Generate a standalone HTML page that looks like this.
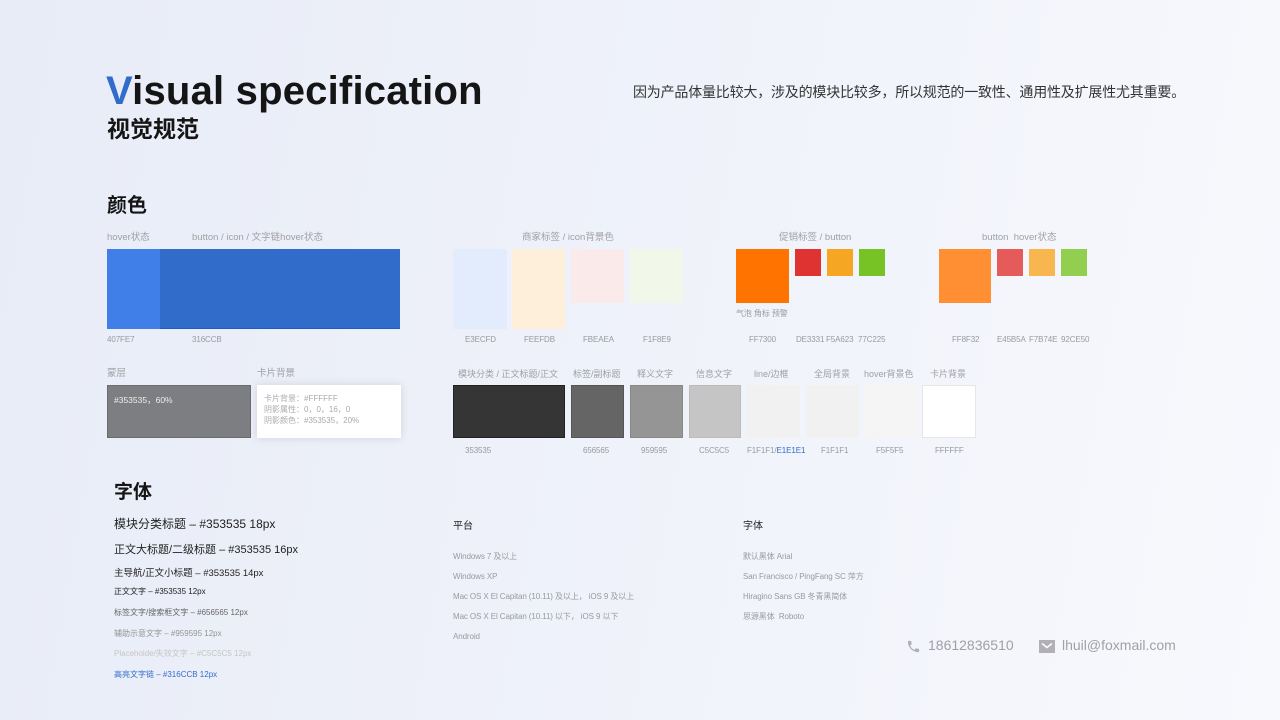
<!DOCTYPE html>
<html><head><meta charset="utf-8"><style>
*{margin:0;padding:0;box-sizing:border-box}
body{width:1280px;height:720px;overflow:hidden;position:relative;font-family:"Liberation Sans","Noto Sans CJK SC",sans-serif;background:linear-gradient(100deg,#e8ecf7 0%,#eff2fa 50%,#f8f9fd 100%)}
.a{position:absolute;white-space:nowrap}
.l{font-size:9.5px;color:#a0a0a6;line-height:12px}
.c{font-size:8px;color:#9a9aa0;line-height:12px;letter-spacing:-0.1px}
.s{position:absolute}
</style></head><body>
<div class="a" style="left:106px;top:68px;font-size:40px;font-weight:bold;color:#151515;letter-spacing:0.2px;line-height:46px"><span style="color:#316CCB">V</span>isual specification</div>
<div class="a" style="left:107px;top:114px;font-size:23px;font-weight:bold;color:#151515;line-height:30px">视觉规范</div>
<div class="a" style="left:633px;top:83px;font-size:14px;color:#333;line-height:18px;letter-spacing:-0.2px">因为产品体量比较大，涉及的模块比较多，所以规范的一致性、通用性及扩展性尤其重要。</div>
<div class="a" style="left:107px;top:194px;font-size:20px;font-weight:bold;color:#151515;line-height:24px">颜色</div>

<div class="a l" style="left:107px;top:232px">hover状态</div>
<div class="a l" style="left:192px;top:232px">button / icon / 文字链hover状态</div>
<div class="s" style="left:107px;top:249px;width:53px;height:80px;background:#407FE7"></div>
<div class="s" style="left:160px;top:249px;width:240px;height:80px;background:#316CCB;border-bottom:1px solid #1d5bc9"></div>
<div class="a c" style="left:107px;top:334px">407FE7</div>
<div class="a c" style="left:192px;top:334px">316CCB</div>

<div class="a l" style="left:522px;top:232px">商家标签 / icon背景色</div>
<div class="s" style="left:453px;top:249px;width:54px;height:80px;background:#E3ECFD"></div>
<div class="s" style="left:512px;top:249px;width:53px;height:80px;background:#FEEFDB"></div>
<div class="s" style="left:571px;top:249px;width:53px;height:54px;background:#FBEAEA"></div>
<div class="s" style="left:630px;top:249px;width:53px;height:54px;background:#F1F8E9"></div>
<div class="a c" style="left:465px;top:334px">E3ECFD</div>
<div class="a c" style="left:524px;top:334px">FEEFDB</div>
<div class="a c" style="left:583px;top:334px">FBEAEA</div>
<div class="a c" style="left:643px;top:334px">F1F8E9</div>

<div class="a l" style="left:779px;top:232px">促销标签 / button</div>
<div class="s" style="left:736px;top:249px;width:53px;height:54px;background:#FF7300"></div>
<div class="s" style="left:795px;top:249px;width:26px;height:27px;background:#DE3331"></div>
<div class="s" style="left:827px;top:249px;width:26px;height:27px;background:#F5A623"></div>
<div class="s" style="left:859px;top:249px;width:26px;height:27px;background:#77C225"></div>
<div class="a c" style="left:736px;top:308px">气泡 角标 预警</div>
<div class="a c" style="left:749px;top:334px">FF7300</div>
<div class="a c" style="left:796px;top:334px">DE3331</div>
<div class="a c" style="left:826px;top:334px">F5A623</div>
<div class="a c" style="left:858px;top:334px">77C225</div>

<div class="a l" style="left:982px;top:232px">button &nbsp;hover状态</div>
<div class="s" style="left:939px;top:249px;width:52px;height:54px;background:#FF8F32"></div>
<div class="s" style="left:997px;top:249px;width:26px;height:27px;background:#E45B5A"></div>
<div class="s" style="left:1029px;top:249px;width:26px;height:27px;background:#F7B74E"></div>
<div class="s" style="left:1061px;top:249px;width:26px;height:27px;background:#92CE50"></div>
<div class="a c" style="left:952px;top:334px">FF8F32</div>
<div class="a c" style="left:997px;top:334px">E45B5A</div>
<div class="a c" style="left:1029px;top:334px">F7B74E</div>
<div class="a c" style="left:1061px;top:334px">92CE50</div>

<div class="a l" style="left:107px;top:368px">蒙层</div>
<div class="a l" style="left:257px;top:368px">卡片背景</div>
<div class="s" style="left:107px;top:385px;width:144px;height:53px;background:#7d7e82;border:1px solid #6a6b6f"></div>
<div class="a" style="left:114px;top:394px;font-size:8.5px;color:#eee">#353535，60%</div>
<div class="s" style="left:257px;top:385px;width:144px;height:53px;background:#fff;box-shadow:0 0 8px rgba(53,53,53,.15)"></div>
<div class="a" style="left:264px;top:393px;font-size:8px;color:#aaa;line-height:11px">卡片背景：#FFFFFF<br>阴影属性：0，0，16，0<br>阴影颜色：#353535，20%</div>

<div class="a l" style="left:458px;top:368px;font-size:9px">模块分类 / 正文标题/正文</div>
<div class="a l" style="left:573px;top:368px;font-size:9px">标签/副标题</div>
<div class="a l" style="left:637px;top:368px;font-size:9px">释义文字</div>
<div class="a l" style="left:696px;top:368px;font-size:9px">信息文字</div>
<div class="a l" style="left:754px;top:368px;font-size:9px">line/边框</div>
<div class="a l" style="left:814px;top:368px;font-size:9px">全局背景</div>
<div class="a l" style="left:864px;top:368px;font-size:9px">hover背景色</div>
<div class="a l" style="left:930px;top:368px;font-size:9px">卡片背景</div>
<div class="s" style="left:453px;top:385px;width:112px;height:53px;background:#353535;border:1px solid #222"></div>
<div class="s" style="left:571px;top:385px;width:53px;height:53px;background:#656565;border:1px solid #555"></div>
<div class="s" style="left:630px;top:385px;width:53px;height:53px;background:#959595;border:1px solid #888"></div>
<div class="s" style="left:689px;top:385px;width:52px;height:53px;background:#C5C5C5;border:1px solid #bbb"></div>
<div class="s" style="left:747px;top:385px;width:53px;height:53px;background:#F1F1F1"></div>
<div class="s" style="left:806px;top:385px;width:53px;height:53px;background:#F1F1F1"></div>
<div class="s" style="left:864px;top:385px;width:53px;height:53px;background:#F5F5F5"></div>
<div class="s" style="left:922px;top:385px;width:54px;height:53px;background:#FFFFFF;border:1px solid #e6e6e6"></div>
<div class="a c" style="left:465px;top:445px">353535</div>
<div class="a c" style="left:583px;top:445px">656565</div>
<div class="a c" style="left:641px;top:445px">959595</div>
<div class="a c" style="left:699px;top:445px">C5C5C5</div>
<div class="a c" style="left:747px;top:445px">F1F1F1/<span style="color:#316CCB">E1E1E1</span></div>
<div class="a c" style="left:821px;top:445px">F1F1F1</div>
<div class="a c" style="left:876px;top:445px">F5F5F5</div>
<div class="a c" style="left:935px;top:445px">FFFFFF</div>

<div class="a" style="left:114px;top:482px;font-size:19px;font-weight:bold;color:#151515;line-height:22px">字体</div>
<div class="a" style="left:114px;top:515px;font-size:12px;color:#222">模块分类标题 – #353535 18px</div>
<div class="a" style="left:114px;top:541px;font-size:11px;color:#222">正文大标题/二级标题 – #353535 16px</div>
<div class="a" style="left:114px;top:565px;font-size:9.5px;color:#222">主导航/正文小标题 – #353535 14px</div>
<div class="a" style="left:114px;top:586px;font-size:8px;color:#222">正文文字 – #353535 12px</div>
<div class="a" style="left:114px;top:607px;font-size:8px;color:#656565">标签文字/搜索框文字 – #656565 12px</div>
<div class="a" style="left:114px;top:628px;font-size:8px;color:#959595">辅助示意文字 – #959595 12px</div>
<div class="a" style="left:114px;top:648px;font-size:8px;color:#C5C5C5">Placeholde/失效文字 – #C5C5C5 12px</div>
<div class="a" style="left:114px;top:669px;font-size:8px;color:#316CCB">高亮文字链 – #316CCB 12px</div>

<div class="a" style="left:453px;top:517px;font-size:10px;color:#222">平台</div>
<div class="a c" style="left:453px;top:551px">Windows 7 及以上</div>
<div class="a c" style="left:453px;top:571px">Windows XP</div>
<div class="a c" style="left:453px;top:591px">Mac OS X El Capitan (10.11) 及以上，&nbsp;iOS 9 及以上</div>
<div class="a c" style="left:453px;top:611px">Mac OS X El Capitan (10.11) 以下，&nbsp;iOS 9 以下</div>
<div class="a c" style="left:453px;top:631px">Android</div>

<div class="a" style="left:743px;top:517px;font-size:10px;color:#222">字体</div>
<div class="a c" style="left:743px;top:551px">默认黑体 Arial</div>
<div class="a c" style="left:743px;top:571px">San Francisco / PingFang SC 萍方</div>
<div class="a c" style="left:743px;top:591px">Hiragino Sans GB 冬青黑简体</div>
<div class="a c" style="left:743px;top:611px">思源黑体 &nbsp;Roboto</div>

<svg class="s" style="left:906px;top:639px" width="15" height="15" viewBox="0 0 24 24"><path d="M6.6 10.8c1.4 2.8 3.8 5.1 6.6 6.6l2.2-2.2c.3-.3.7-.4 1-.2 1.1.4 2.3.6 3.6.6.6 0 1 .4 1 1V20c0 .6-.4 1-1 1C10.6 21 3 13.4 3 4c0-.6.4-1 1-1h3.5c.6 0 1 .4 1 1 0 1.3.2 2.5.6 3.6.1.3 0 .7-.2 1z" fill="#b0b0b6"/></svg>
<div class="a" style="left:928px;top:637px;font-size:14px;color:#a0a0a6">18612836510</div>
<svg class="s" style="left:1039px;top:640px" width="16" height="13" viewBox="0 0 16 13"><rect width="16" height="13" fill="#b0b0b6"/><path d="M3 3.5l5 4 5-4" stroke="#fff" stroke-width="1.5" fill="none"/></svg>
<div class="a" style="left:1062px;top:637px;font-size:14px;color:#a0a0a6">lhuil@foxmail.com</div>
</body></html>
